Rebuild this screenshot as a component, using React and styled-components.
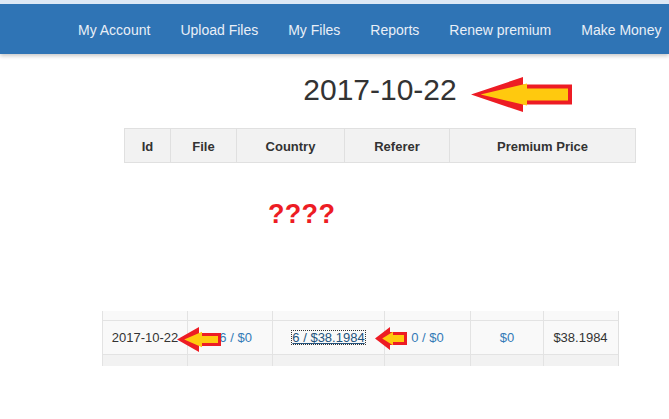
import React from "react";
import styled, { createGlobalStyle } from "styled-components";

const Global = createGlobalStyle`
  html, body { margin: 0; padding: 0; background: #fff; }
  body { font-family: "Liberation Sans", Arial, sans-serif; color: #333; width: 669px; height: 419px; overflow: hidden; }
`;

const NavBar = styled.nav`
  height: 50px;
  border-top: 4px solid #dde8f5;
  background: #2f74b5;
  box-shadow: 0 2px 4px rgba(0, 0, 0, 0.22);
  display: flex;
  align-items: center;
`;

const NavList = styled.ul`
  list-style: none;
  margin: 0 0 0 63px;
  padding: 0;
  display: flex;
  white-space: nowrap;
`;

const NavItem = styled.li`
  padding: 0 15px;
  font-size: 14px;
  line-height: 20px;
  color: #e9eff7;
  margin-top: 1px;
`;

const Section = styled.section`
  margin-left: ${(p) => p.$left}px;
  width: ${(p) => p.$width}px;
`;

const HeadingRow = styled.div`
  margin-top: 19px;
  text-align: center;
`;

const Heading = styled.h1`
  position: relative;
  display: inline-block;
  margin: 0;
  font-size: 30px;
  line-height: 33px;
  font-weight: 400;
  color: #333;
`;

const Overlay = styled.span`
  position: absolute;
  left: ${(p) => p.$x};
  top: ${(p) => p.$y}px;
  line-height: 0;
`;

const Grid = styled.div`
  display: grid;
  grid-template-columns: ${(p) => p.$cols};
  border-right: 1px solid #e0e0e0;
  background: ${(p) => p.$bg};
  position: relative;
`;

const HeadGrid = styled(Grid)`
  margin-top: 22px;
  border-top: 1px solid #e0e0e0;
  border-bottom: 1px solid #e0e0e0;
`;

const HeadCell = styled.div`
  border-left: 1px solid #e0e0e0;
  height: 33px;
  display: flex;
  align-items: center;
  justify-content: center;
  font-size: 13px;
  font-weight: 700;
  color: #333;
  padding-top: 1px;
  box-sizing: border-box;
`;

const Question = styled.div`
  margin: 38px 0 0 144px;
  font-size: 27px;
  line-height: 27px;
  font-weight: 700;
  color: #ed1c24;
  letter-spacing: 0.3px;
`;

const LowerTable = styled.div`
  margin-top: 83px;
`;

const Cell = styled.div`
  border-left: 1px solid #e3e3e3;
  height: ${(p) => p.$h}px;
  display: flex;
  align-items: center;
  justify-content: center;
  font-size: 13px;
  color: #333;
  overflow: hidden;
`;

const RowLine = styled(Grid)`
  border-bottom: ${(p) => (p.$last ? "none" : "1px solid #e3e3e3")};
`;

const Blue = styled.span`
  color: #337ab7;
  padding-left: ${(p) => p.$shift || 0}px;
`;

const FocusLink = styled.a`
  color: #23527c;
  text-decoration: underline;
  outline: 1px dotted #333;
  outline-offset: 0;
  line-height: 13px;
`;

function Arrow({ w, h, head, shaft, t }) {
  const m = h / 2;
  const s1 = (h - shaft) / 2;
  const s2 = (h + shaft) / 2;
  const outer = [
    [0, m], [head, 0], [head, s1], [w, s1], [w, s2], [head, s2], [head, h],
  ];
  const inner = [
    [t * 2.4, m], [head + t, t * 1.6], [head + t, s1 + t], [w - t, s1 + t],
    [w - t, s2 - t], [head + t, s2 - t], [head + t, h - t * 1.6],
  ];
  const pts = (a) => a.map((p) => p.join(",")).join(" ");
  return (
    <svg width={w} height={h} viewBox={`0 0 ${w} ${h}`}>
      <polygon points={pts(outer)} fill="#ed1c24" />
      <polygon points={pts(inner)} fill="#ffc90e" />
    </svg>
  );
}

const headCols = "46px 66px 108px 105px 186px";
const lowCols = "85px 85px 112px 86px 73px 74px";

export default function App() {
  return (
    <>
      <Global />
      <NavBar>
        <NavList>
          {["My Account", "Upload Files", "My Files", "Reports", "Renew premium", "Make Money"].map((t) => (
            <NavItem key={t}>{t}</NavItem>
          ))}
        </NavList>
      </NavBar>

      <Section $left={124} $width={512}>
        <HeadingRow>
          <Heading>
            2017-10-22
            <Overlay $x="calc(100% + 14px)" $y={4}>
              <Arrow w={101} h={35} head={52} shaft={20} t={4} />
            </Overlay>
          </Heading>
        </HeadingRow>
        <HeadGrid $cols={headCols} $bg="#f2f2f2">
          {["Id", "File", "Country", "Referer", "Premium Price"].map((t) => (
            <HeadCell key={t}>{t}</HeadCell>
          ))}
        </HeadGrid>
        <Question>????</Question>
      </Section>

      <Section $left={102} $width={517}>
        <LowerTable>
          <RowLine $cols={lowCols} $bg="#f9f9f9">
            {[0, 1, 2, 3, 4, 5].map((i) => (
              <Cell key={i} $h={9} />
            ))}
          </RowLine>
          <RowLine $cols={lowCols} $bg="#f9f9f9">
            <Cell $h={33}>2017-10-22</Cell>
            <Cell $h={33}><Blue $shift={4}>16 / $0</Blue></Cell>
            <Cell $h={33}><FocusLink href="#">6 / $38.1984</FocusLink></Cell>
            <Cell $h={33}><Blue>0 / $0</Blue></Cell>
            <Cell $h={33}><Blue>$0</Blue></Cell>
            <Cell $h={33}>$38.1984</Cell>
            <Overlay $x="75px" $y={6}>
              <Arrow w={44} h={25} head={22} shaft={13} t={3} />
            </Overlay>
            <Overlay $x="273px" $y={6}>
              <Arrow w={32} h={23} head={15} shaft={13} t={3} />
            </Overlay>
          </RowLine>
          <RowLine $cols={lowCols} $bg="#f2f2f2" $last>
            {[0, 1, 2, 3, 4, 5].map((i) => (
              <Cell key={i} $h={11} />
            ))}
          </RowLine>
        </LowerTable>
      </Section>
    </>
  );
}
